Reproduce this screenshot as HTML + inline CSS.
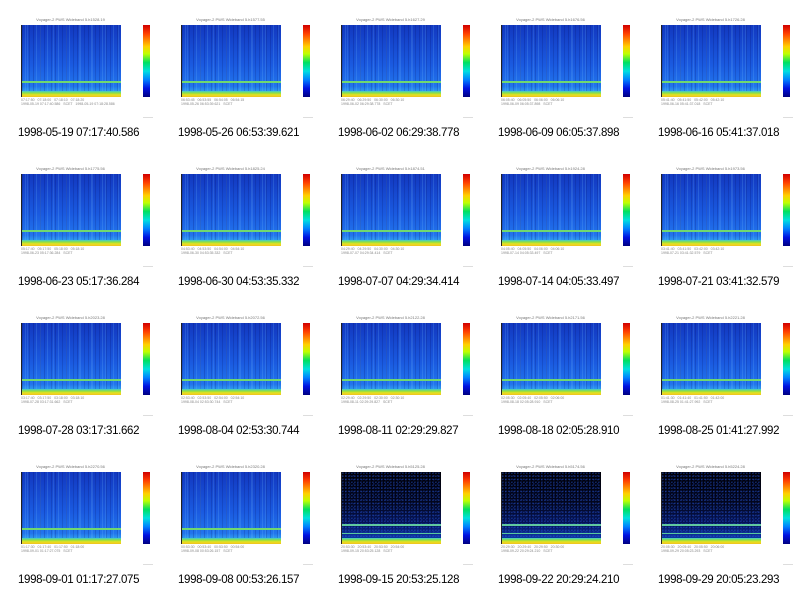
<!DOCTYPE html>
<html><head><meta charset="utf-8"><style>
body{margin:0;width:800px;height:596px;background:#fff;position:relative;overflow:hidden;font-family:"Liberation Sans",sans-serif}
.c{position:absolute;width:160px;height:149px}
.t{position:absolute;left:21px;width:99px;top:17px;font-size:4px;color:#777;text-align:center;white-space:nowrap}
.p{position:absolute;left:21px;top:25px;width:99px;height:72px;border-left:1px solid #222;overflow:hidden;
background:
repeating-linear-gradient(90deg,rgba(0,0,80,.18) 0 1px,transparent 1px 3px,rgba(120,200,255,.18) 3px 4px,transparent 4px 7px,rgba(0,0,60,.15) 7px 8px,transparent 8px 11px),
repeating-linear-gradient(90deg,transparent 0 5px,rgba(140,210,255,.15) 5px 6px,transparent 6px 13px),
linear-gradient(#1238c0,#1a5ae0 55%,#2274ec 85%,#30a0f0 93%)}
.p.d{background:
radial-gradient(circle at 30% 40%,rgba(40,90,220,.6) 0 .6px,transparent .8px) 0 0/3px 3px,
radial-gradient(circle at 70% 70%,rgba(30,70,200,.5) 0 .6px,transparent .8px) 1px 1px/4px 4px,
linear-gradient(#000008,#020620 45%,#061660 75%,#0c34a0 90%)}
.ln{position:absolute;left:0;right:0;top:56px;height:1.5px;background:#70d870}
.ln2{position:absolute;left:0;right:0;top:61px;height:1px;background:#58c8a0;display:none}
.d .ln{top:52px;background:#60c8a0}
.d .ln2{display:block}
.bt{position:absolute;left:0;right:0;bottom:0;height:6px;background:linear-gradient(#40c8d0,#90e040 35%,#e8e020 65%,#f0c020)}
.cb{position:absolute;left:143px;top:25px;width:7px;height:72px;background:linear-gradient(#d00000,#ff4000 12%,#ffd000 30%,#c0ff00 40%,#00e060 52%,#00e0e0 64%,#0080ff 76%,#0010e0 88%,#000080)}
.ax{position:absolute;left:21px;top:98px;width:100px;font-size:3.5px;color:#888;white-space:nowrap}
.cap{position:absolute;left:18px;top:127px;font-size:11.5px;color:#000;letter-spacing:-0.35px;white-space:nowrap}
.sm{position:absolute;left:143px;top:117px;width:10px;height:1px;background:#ddd}
</style></head><body>

<div class="c" style="left:0;top:0"><div class="t">Voyager-2 PWS Wideband 5.h1528.19</div><div class="p"><div class="ln"></div><div class="ln2"></div><div class="bt"></div></div><div class="cb"></div><div class="ax">07:17:50 &nbsp; 07:18:00 &nbsp; 07:18:10 &nbsp; 07:18:20<br>1998-05-19 07:17:40.586 &nbsp; SCET &nbsp; 1998-05-19 07:18:28.586</div><div class="sm"></div><div class="cap">1998-05-19 07:17:40.586</div></div>
<div class="c" style="left:160px;top:0"><div class="t">Voyager-2 PWS Wideband 5.h1577.55</div><div class="p"><div class="ln"></div><div class="ln2"></div><div class="bt"></div></div><div class="cb"></div><div class="ax">06:53:45 &nbsp; 06:53:55 &nbsp; 06:54:05 &nbsp; 06:54:15<br>1998-05-26 06:53:39.621 &nbsp; SCET</div><div class="sm"></div><div class="cap">1998-05-26 06:53:39.621</div></div>
<div class="c" style="left:320px;top:0"><div class="t">Voyager-2 PWS Wideband 5.h1627.29</div><div class="p"><div class="ln"></div><div class="ln2"></div><div class="bt"></div></div><div class="cb"></div><div class="ax">06:29:40 &nbsp; 06:29:50 &nbsp; 06:30:00 &nbsp; 06:30:10<br>1998-06-02 06:29:38.778 &nbsp; SCET</div><div class="sm"></div><div class="cap">1998-06-02 06:29:38.778</div></div>
<div class="c" style="left:480px;top:0"><div class="t">Voyager-2 PWS Wideband 5.h1676.56</div><div class="p"><div class="ln"></div><div class="ln2"></div><div class="bt"></div></div><div class="cb"></div><div class="ax">06:05:40 &nbsp; 06:05:50 &nbsp; 06:06:00 &nbsp; 06:06:10<br>1998-06-09 06:05:37.898 &nbsp; SCET</div><div class="sm"></div><div class="cap">1998-06-09 06:05:37.898</div></div>
<div class="c" style="left:640px;top:0"><div class="t">Voyager-2 PWS Wideband 5.h1726.28</div><div class="p"><div class="ln"></div><div class="ln2"></div><div class="bt"></div></div><div class="cb"></div><div class="ax">05:41:40 &nbsp; 05:41:50 &nbsp; 05:42:00 &nbsp; 05:42:10<br>1998-06-16 05:41:37.018 &nbsp; SCET</div><div class="sm"></div><div class="cap">1998-06-16 05:41:37.018</div></div>

<div class="c" style="left:0;top:149px"><div class="t">Voyager-2 PWS Wideband 5.h1775.56</div><div class="p"><div class="ln"></div><div class="ln2"></div><div class="bt"></div></div><div class="cb"></div><div class="ax">05:17:40 &nbsp; 05:17:50 &nbsp; 05:18:00 &nbsp; 05:18:10<br>1998-06-23 05:17:36.284 &nbsp; SCET</div><div class="sm"></div><div class="cap">1998-06-23 05:17:36.284</div></div>
<div class="c" style="left:160px;top:149px"><div class="t">Voyager-2 PWS Wideband 5.h1825.24</div><div class="p"><div class="ln"></div><div class="ln2"></div><div class="bt"></div></div><div class="cb"></div><div class="ax">04:53:40 &nbsp; 04:53:50 &nbsp; 04:54:00 &nbsp; 04:54:10<br>1998-06-30 04:53:35.332 &nbsp; SCET</div><div class="sm"></div><div class="cap">1998-06-30 04:53:35.332</div></div>
<div class="c" style="left:320px;top:149px"><div class="t">Voyager-2 PWS Wideband 5.h1874.51</div><div class="p"><div class="ln"></div><div class="ln2"></div><div class="bt"></div></div><div class="cb"></div><div class="ax">04:29:40 &nbsp; 04:29:50 &nbsp; 04:30:00 &nbsp; 04:30:10<br>1998-07-07 04:29:34.414 &nbsp; SCET</div><div class="sm"></div><div class="cap">1998-07-07 04:29:34.414</div></div>
<div class="c" style="left:480px;top:149px"><div class="t">Voyager-2 PWS Wideband 5.h1924.28</div><div class="p"><div class="ln"></div><div class="ln2"></div><div class="bt"></div></div><div class="cb"></div><div class="ax">04:05:40 &nbsp; 04:05:50 &nbsp; 04:06:00 &nbsp; 04:06:10<br>1998-07-14 04:05:33.497 &nbsp; SCET</div><div class="sm"></div><div class="cap">1998-07-14 04:05:33.497</div></div>
<div class="c" style="left:640px;top:149px"><div class="t">Voyager-2 PWS Wideband 5.h1973.56</div><div class="p"><div class="ln"></div><div class="ln2"></div><div class="bt"></div></div><div class="cb"></div><div class="ax">03:41:40 &nbsp; 03:41:50 &nbsp; 03:42:00 &nbsp; 03:42:10<br>1998-07-21 03:41:32.579 &nbsp; SCET</div><div class="sm"></div><div class="cap">1998-07-21 03:41:32.579</div></div>

<div class="c" style="left:0;top:298px"><div class="t">Voyager-2 PWS Wideband 5.h2023.28</div><div class="p"><div class="ln"></div><div class="ln2"></div><div class="bt"></div></div><div class="cb"></div><div class="ax">03:17:40 &nbsp; 03:17:50 &nbsp; 03:18:00 &nbsp; 03:18:10<br>1998-07-28 03:17:31.662 &nbsp; SCET</div><div class="sm"></div><div class="cap">1998-07-28 03:17:31.662</div></div>
<div class="c" style="left:160px;top:298px"><div class="t">Voyager-2 PWS Wideband 5.h2072.56</div><div class="p"><div class="ln"></div><div class="ln2"></div><div class="bt"></div></div><div class="cb"></div><div class="ax">02:53:40 &nbsp; 02:53:50 &nbsp; 02:54:00 &nbsp; 02:54:10<br>1998-08-04 02:53:30.744 &nbsp; SCET</div><div class="sm"></div><div class="cap">1998-08-04 02:53:30.744</div></div>
<div class="c" style="left:320px;top:298px"><div class="t">Voyager-2 PWS Wideband 5.h2122.28</div><div class="p"><div class="ln"></div><div class="ln2"></div><div class="bt"></div></div><div class="cb"></div><div class="ax">02:29:40 &nbsp; 02:29:50 &nbsp; 02:30:00 &nbsp; 02:30:10<br>1998-08-11 02:29:29.827 &nbsp; SCET</div><div class="sm"></div><div class="cap">1998-08-11 02:29:29.827</div></div>
<div class="c" style="left:480px;top:298px"><div class="t">Voyager-2 PWS Wideband 5.h2171.56</div><div class="p"><div class="ln"></div><div class="ln2"></div><div class="bt"></div></div><div class="cb"></div><div class="ax">02:05:30 &nbsp; 02:05:40 &nbsp; 02:05:50 &nbsp; 02:06:00<br>1998-08-18 02:05:28.910 &nbsp; SCET</div><div class="sm"></div><div class="cap">1998-08-18 02:05:28.910</div></div>
<div class="c" style="left:640px;top:298px"><div class="t">Voyager-2 PWS Wideband 5.h2221.28</div><div class="p"><div class="ln"></div><div class="ln2"></div><div class="bt"></div></div><div class="cb"></div><div class="ax">01:41:30 &nbsp; 01:41:40 &nbsp; 01:41:50 &nbsp; 01:42:00<br>1998-08-25 01:41:27.992 &nbsp; SCET</div><div class="sm"></div><div class="cap">1998-08-25 01:41:27.992</div></div>

<div class="c" style="left:0;top:447px"><div class="t">Voyager-2 PWS Wideband 5.h2270.56</div><div class="p"><div class="ln"></div><div class="ln2"></div><div class="bt"></div></div><div class="cb"></div><div class="ax">01:17:30 &nbsp; 01:17:40 &nbsp; 01:17:50 &nbsp; 01:18:00<br>1998-09-01 01:17:27.075 &nbsp; SCET</div><div class="sm"></div><div class="cap">1998-09-01 01:17:27.075</div></div>
<div class="c" style="left:160px;top:447px"><div class="t">Voyager-2 PWS Wideband 5.h2320.28</div><div class="p"><div class="ln"></div><div class="ln2"></div><div class="bt"></div></div><div class="cb"></div><div class="ax">00:53:30 &nbsp; 00:53:40 &nbsp; 00:53:50 &nbsp; 00:54:00<br>1998-09-08 00:53:26.157 &nbsp; SCET</div><div class="sm"></div><div class="cap">1998-09-08 00:53:26.157</div></div>
<div class="c" style="left:320px;top:447px"><div class="t">Voyager-2 PWS Wideband 5.h5125.28</div><div class="p d"><div class="ln"></div><div class="ln2"></div><div class="bt"></div></div><div class="cb"></div><div class="ax">20:53:30 &nbsp; 20:53:40 &nbsp; 20:53:50 &nbsp; 20:54:00<br>1998-09-15 20:53:25.128 &nbsp; SCET</div><div class="sm"></div><div class="cap">1998-09-15 20:53:25.128</div></div>
<div class="c" style="left:480px;top:447px"><div class="t">Voyager-2 PWS Wideband 5.h5174.56</div><div class="p d"><div class="ln"></div><div class="ln2"></div><div class="bt"></div></div><div class="cb"></div><div class="ax">20:29:30 &nbsp; 20:29:40 &nbsp; 20:29:50 &nbsp; 20:30:00<br>1998-09-22 20:29:24.210 &nbsp; SCET</div><div class="sm"></div><div class="cap">1998-09-22 20:29:24.210</div></div>
<div class="c" style="left:640px;top:447px"><div class="t">Voyager-2 PWS Wideband 5.h5224.28</div><div class="p d"><div class="ln"></div><div class="ln2"></div><div class="bt"></div></div><div class="cb"></div><div class="ax">20:05:30 &nbsp; 20:05:40 &nbsp; 20:05:50 &nbsp; 20:06:00<br>1998-09-29 20:05:23.293 &nbsp; SCET</div><div class="sm"></div><div class="cap">1998-09-29 20:05:23.293</div></div>

</body></html>
